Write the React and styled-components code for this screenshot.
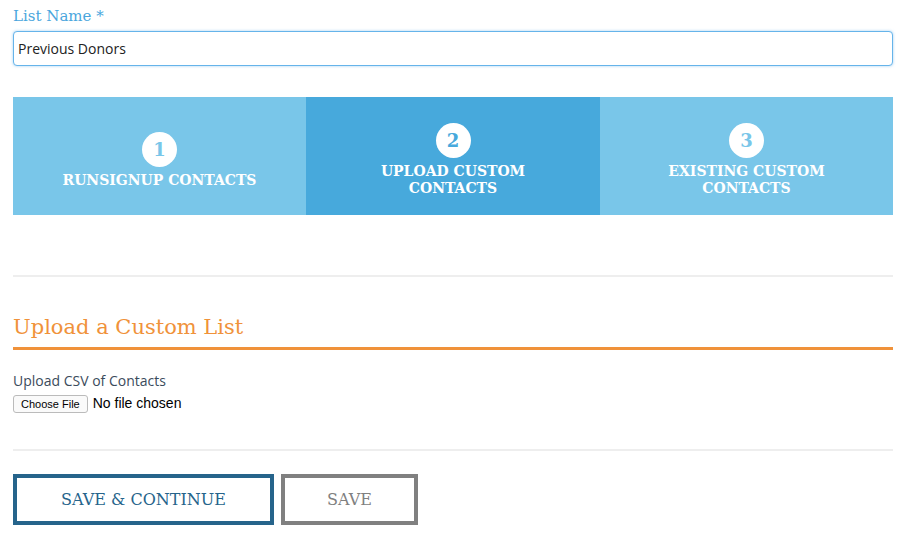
import React from "react";
import styled, { createGlobalStyle } from "styled-components";

const GlobalStyle = createGlobalStyle`
  body {
    margin: 0;
    background: #fff;
    font-family: "Open Sans", "Liberation Sans", sans-serif;
  }
`;

const serif = `"DejaVu Serif", "Liberation Serif", serif`;

const Page = styled.div`
  width: 880px;
  padding: 7px 0 0 13px;
`;

const Label = styled.label`
  display: block;
  font-family: ${serif};
  font-size: 15px;
  color: #4aa6dd;
  margin-bottom: 6px;
`;

const TextInput = styled.input`
  box-sizing: border-box;
  width: 100%;
  height: 35px;
  padding: 0 4px;
  border: 1px solid #66b4ea;
  border-radius: 4px;
  box-shadow: 0 0 3px rgba(102, 175, 233, 0.6);
  font-family: "Open Sans", sans-serif;
  font-size: 14px;
  color: #222;
  outline: none;
`;

const Steps = styled.div`
  display: grid;
  grid-template-columns: 293px 294px 293px;
  height: 118px;
  margin-top: 31px;
`;

const Step = styled.div`
  box-sizing: border-box;
  display: flex;
  flex-direction: column;
  align-items: center;
  justify-content: center;
  background: ${(p) => (p.$active ? "#47a9dc" : "#79c6e9")};
  color: #fff;
  font-family: ${serif};
  font-weight: bold;
  font-size: 14px;
  line-height: 17px;
  text-align: center;
  text-transform: uppercase;
  padding-top: 8px;
`;

const Num = styled.div`
  width: 35px;
  height: 35px;
  border-radius: 50%;
  background: #fff;
  color: ${(p) => (p.$active ? "#47a9dc" : "#79c6e9")};
  display: flex;
  align-items: center;
  justify-content: center;
  font-size: 18px;
  margin-bottom: 5px;
`;

const Rule = styled.hr`
  border: 0;
  height: 2px;
  background: #eeeeee;
  margin: ${(p) => p.$m || "0"};
`;

const Heading = styled.h2`
  margin: 0;
  font-family: ${serif};
  font-weight: normal;
  font-size: 21px;
  color: #f0923a;
  padding-bottom: 8px;
  border-bottom: 3px solid #f0923a;
`;

const FieldLabel = styled.div`
  margin-top: 21px;
  font-size: 14px;
  color: #3b4b5c;
`;

const FileInput = styled.input`
  display: block;
  margin-top: 5px;
  font-family: "Liberation Sans", sans-serif;
  font-size: 14px;
  &::file-selector-button {
    font-size: 11px;
    padding: 2px 7px;
    margin-right: 5px;
    border: 1px solid #bbb;
    border-radius: 3px;
    background: #fafafa;
  }
`;

const Buttons = styled.div`
  display: flex;
  gap: 7px;
  margin-top: 23px;
`;

const Button = styled.button`
  box-sizing: border-box;
  height: 51px;
  width: ${(p) => p.$w}px;
  background: #fff;
  border: 4px solid ${(p) => p.$color};
  color: ${(p) => p.$color};
  font-family: ${serif};
  font-size: 16px;
  text-transform: uppercase;
`;

export default function App() {
  return (
    <Page>
      <GlobalStyle />
      <Label>List Name *</Label>
      <TextInput defaultValue="Previous Donors" />
      <Steps>
        <Step>
          <Num>1</Num>
          RunSignup Contacts
        </Step>
        <Step $active>
          <Num $active>2</Num>
          Upload Custom
          <br />
          Contacts
        </Step>
        <Step>
          <Num>3</Num>
          Existing Custom
          <br />
          Contacts
        </Step>
      </Steps>
      <Rule $m="60px 0 38px" />
      <Heading>Upload a Custom List</Heading>
      <FieldLabel>Upload CSV of Contacts</FieldLabel>
      <FileInput type="file" />
      <Rule $m="36px 0 0" />
      <Buttons>
        <Button $w={261} $color="#26648b">Save &amp; Continue</Button>
        <Button $w={137} $color="#808080">Save</Button>
      </Buttons>
    </Page>
  );
}
